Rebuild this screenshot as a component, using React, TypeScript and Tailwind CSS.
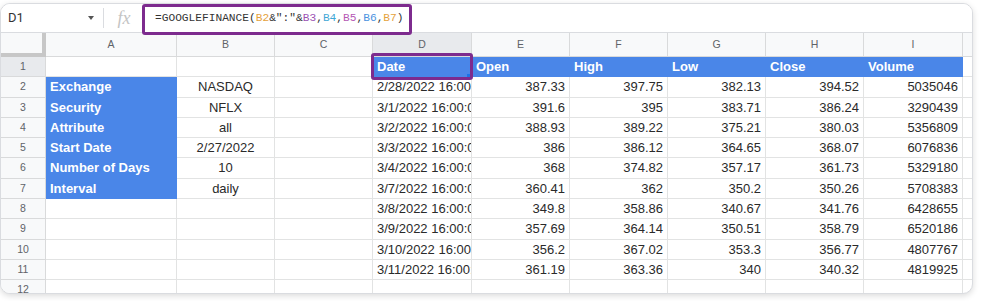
import React from "react";

const COLS = [
  "w-[131px]",
  "w-[98px]",
  "w-[98px]",
  "w-[99px]",
  "w-[98px]",
  "w-[98px]",
  "w-[98px]",
  "w-[98px]",
  "w-[99px]",
];
const LETTERS = ["A", "B", "C", "D", "E", "F", "G", "H", "I"];
const HEIGHTS = [
  "h-[20px]",
  "h-[21px]",
  "h-[20px]",
  "h-[20px]",
  "h-[20px]",
  "h-[21px]",
  "h-[20px]",
  "h-[20px]",
  "h-[21px]",
  "h-[20px]",
  "h-[20px]",
];

const labels: [string, string][] = [
  ["Exchange", "NASDAQ"],
  ["Security", "NFLX"],
  ["Attribute", "all"],
  ["Start Date", "2/27/2022"],
  ["Number of Days", "10"],
  ["Interval", "daily"],
];

const data: [string, string, string, string, string, string][] = [
  ["2/28/2022 16:00:00", "387.33", "397.75", "382.13", "394.52", "5035046"],
  ["3/1/2022 16:00:00", "391.6", "395", "383.71", "386.24", "3290439"],
  ["3/2/2022 16:00:00", "388.93", "389.22", "375.21", "380.03", "5356809"],
  ["3/3/2022 16:00:00", "386", "386.12", "364.65", "368.07", "6076836"],
  ["3/4/2022 16:00:00", "368", "374.82", "357.17", "361.73", "5329180"],
  ["3/7/2022 16:00:00", "360.41", "362", "350.2", "350.26", "5708383"],
  ["3/8/2022 16:00:00", "349.8", "358.86", "340.67", "341.76", "6428655"],
  ["3/9/2022 16:00:00", "357.69", "364.14", "350.51", "358.79", "6520186"],
  ["3/10/2022 16:00:00", "356.2", "367.02", "353.3", "356.77", "4807767"],
  ["3/11/2022 16:00:00", "361.19", "363.36", "340", "340.32", "4819925"],
];

const headers = ["Date", "Open", "High", "Low", "Close", "Volume"];

function Cell({
  w,
  children,
  blue,
  align = "left",
  bold,
}: {
  w: string;
  children?: React.ReactNode;
  blue?: boolean;
  align?: "left" | "right" | "center";
  bold?: boolean;
}) {
  const al =
    align === "right" ? "justify-end" : align === "center" ? "justify-center" : "justify-start";
  return (
    <div
      className={`${w} shrink-0 h-full flex items-center ${al} px-[4px] overflow-hidden whitespace-nowrap border-r border-b ${
        blue
          ? "bg-[#4a86e8] border-[#4a86e8] text-white"
          : "bg-white border-[#e2e3e3] text-[#2a2a2a]"
      } ${bold ? "font-bold" : ""}`}
    >
      {children}
    </div>
  );
}

export default function App() {
  return (
    <div
      className="relative w-[981px] h-[301px] bg-white overflow-hidden"
      style={{ fontFamily: '"Liberation Sans", Arial, sans-serif' }}
    >
      <div className="mt-[3px] w-[973px] h-[291px] border border-[#dadce0] rounded-[10px] overflow-hidden bg-white shadow-[0_2px_6px_rgba(0,0,0,0.14)]">
        {/* Formula bar */}
        <div className="h-[29px] flex items-center border-b border-[#dadce0] bg-white">
          <div className="w-[102px] flex items-center justify-between pl-[7px] pr-[9px]">
            <span className="text-[13px] text-[#333] font-['Roboto',sans-serif]">D1</span>
            <span className="w-0 h-0 border-l-[3.5px] border-r-[3.5px] border-t-[4px] border-l-transparent border-r-transparent border-t-[#555]" />
          </div>
          <div className="w-px h-[20px] bg-[#dadce0]" />
          <div className="w-[40px] flex items-center justify-center">
            <span className="text-[18px] italic text-[#c4c4c4] leading-none font-['Liberation_Serif',serif]">
              fx
            </span>
          </div>
          <div className="pl-[11px] text-[11.2px] text-[#333] font-['Liberation_Mono',monospace] whitespace-nowrap">
            =GOOGLEFINANCE(
            <span className="text-[#e5a23c]">B2</span>&amp;":"&amp;
            <span className="text-[#9b52b3]">B3</span>,
            <span className="text-[#3fa7d6]">B4</span>,
            <span className="text-[#b558b4]">B5</span>,
            <span className="text-[#4b92e0]">B6</span>,
            <span className="text-[#e5a23c]">B7</span>)
          </div>
        </div>

        {/* Column headers */}
        <div className="h-[24px] flex bg-[#f8f9fa]">
          <div className="w-[45px] shrink-0 h-full bg-[#f8f9fa] border-r-[4px] border-b-[4px] border-[#c7c7c7]" />
          {LETTERS.map((l, i) => (
            <div
              key={l}
              className={`${COLS[i]} shrink-0 h-full flex items-center justify-center text-[10.5px] text-[#5f6368] border-r border-b border-[#d9dadb] ${
                l === "D" ? "bg-[#e8eaed]" : "bg-[#f8f9fa]"
              }`}
            >
              {l}
            </div>
          ))}
          <div className="flex-1 h-full border-b border-[#d9dadb] bg-[#f8f9fa]" />
        </div>

        {/* Rows */}
        {HEIGHTS.map((h, r) => {
          const rowNum = r + 1;
          const lab = r >= 1 && r <= 6 ? labels[r - 1] : null;
          const d = r >= 1 ? data[r - 1] : null;
          return (
            <div key={r} className={`${h} flex text-[13px]`}>
              <div
                className={`w-[45px] shrink-0 h-full flex items-center justify-center text-[10.5px] text-[#5f6368] border-r border-b border-[#d9dadb] ${
                  rowNum === 1 ? "bg-[#e8eaed]" : "bg-[#f8f9fa]"
                }`}
              >
                {rowNum}
              </div>
              <Cell w={COLS[0]} blue={!!lab} bold>
                {lab ? lab[0] : ""}
              </Cell>
              <Cell w={COLS[1]} align="center">
                {lab ? lab[1] : ""}
              </Cell>
              <Cell w={COLS[2]} />
              {r === 0 ? (
                headers.map((t, i) => (
                  <Cell key={t} w={COLS[3 + i]} blue bold>
                    {t}
                  </Cell>
                ))
              ) : (
                <>
                  <Cell w={COLS[3]}>{d![0]}</Cell>
                  {d!.slice(1).map((v, i) => (
                    <Cell key={i} w={COLS[4 + i]} align="right">
                      {v}
                    </Cell>
                  ))}
                </>
              )}
              <div className="flex-1 h-full border-b border-[#e2e3e3] bg-white" />
            </div>
          );
        })}
        <div className="h-[14px] flex">
          <div className="w-[45px] shrink-0 h-full flex items-start justify-center pt-[2px] text-[10.5px] text-[#5f6368] border-r border-[#d9dadb] bg-[#f8f9fa]">
            12
          </div>
          {COLS.map((w, i) => (
            <div key={i} className={`${w} shrink-0 h-full border-r border-[#e2e3e3] bg-white`} />
          ))}
        </div>
      </div>

      {/* Annotation boxes */}
      <div className="absolute left-[142px] top-[4px] w-[270px] h-[31px] border-[3px] border-[#7d2b8e] rounded-[3px]" />
      <div className="absolute left-[371px] top-[53px] w-[102px] h-[27px] border-[3px] border-[#7d2b8e] rounded-[3px]" />
      <div className="absolute left-[467px] top-[74px] w-[3px] h-[3px] bg-[#1a73e8]" />
    </div>
  );
}
